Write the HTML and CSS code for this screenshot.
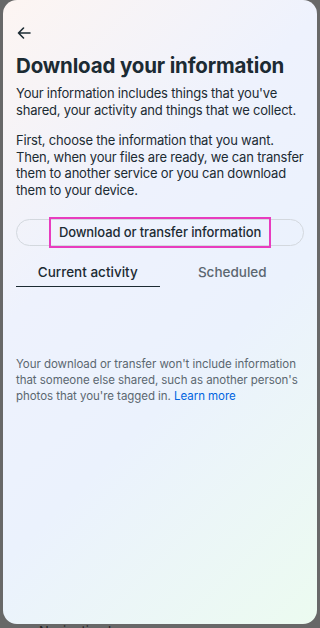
FILE: index.html
```html
<!DOCTYPE html>
<html lang="en">
<head>
<meta charset="utf-8">
<title>Download your information</title>
<link rel="stylesheet" href="styles.css">
</head>
<body>
<div class="screen">
  <div class="card">
    <button class="back" aria-label="Back">
      <svg width="14" height="12" viewBox="0 0 14 12"><path d="M13 6H1.5M6.5 1L1.5 6l5 5" fill="none" stroke="#1c2b33" stroke-width="1.6" stroke-linecap="round" stroke-linejoin="round"/></svg>
    </button>
    <h1 class="title">Download your information</h1>
    <p class="text">Your information includes things that you've shared, your activity and things that we collect.</p>
    <p class="text second">First, choose the information that you want. Then, when your files are ready, we can transfer them to another service or you can download them to your device.</p>
    <div class="pill"><span class="pill-label">Download or transfer information</span></div>
    <div class="tabs">
      <div class="tab active">Current activity</div>
      <div class="tab">Scheduled</div>
    </div>
    <p class="note">Your download or transfer won't include information that someone else shared, such as another person's photos that you're tagged in. <a class="link" href="#">Learn more</a></p>
  </div>
  <div class="navbar"><span class="nav-icon">&lt;&gt;</span><span>Navigation bar</span></div>
</div>
</body>
</html>
```
FILE: styles.css
```css
html, body {
  margin: 0;
  padding: 0;
  background: #686868;
  font-family: Inter, "Noto Sans", sans-serif;
  color: #1c2b33;
}
.screen {
  width: 320px;
  height: 628px;
  overflow: hidden;
}
.card {
  margin: 0 3px;
  height: 624px;
  box-sizing: border-box;
  border-radius: 14px;
  padding: 24px 13px 0;
  background:
    linear-gradient(135deg, #fdf5f2 0%, #eef2fd 35%, #ebf2fd 60%, #ecfbf0 100%);
}
.back {
  display: block;
  border: 0;
  background: none;
  padding: 0;
  width: 14px;
  height: 14px;
  margin: 2px 0 0 1px;
}
.back svg { display: block; }
.title {
  margin: 14px 0 0;
  font-size: 20.5px;
  line-height: 24px;
  font-weight: 700;
  letter-spacing: -0.15px;
}
.text {
  margin: 7px 0 0;
  font-size: 13px;
  line-height: 16.5px;
  letter-spacing: -0.2px;
}
.text.second { margin-top: 14px; }
.pill {
  margin-top: 21px;
  height: 27px;
  border: 1px solid #d3d8de;
  border-radius: 14px;
  box-sizing: border-box;
  display: flex;
  align-items: center;
  justify-content: center;
}
.pill-label {
  font-size: 13px;
  font-weight: 500;
  padding: 4px 8px;
  outline: 2px solid #e83cbf;
  outline-offset: 0;
  line-height: 19px;
  letter-spacing: -0.1px;
}
.tabs {
  display: flex;
  margin-top: 17px;
}
.tab {
  width: 144px;
  text-align: center;
  font-size: 13.5px;
  font-weight: 500;
  line-height: 18px;
  padding-bottom: 5px;
  color: #5b6770;
}
.tab.active {
  color: #1c2b33;
  border-bottom: 1px solid #1c2b33;
}
.tab + .tab { margin-left: 1px; }
.note {
  margin: 69px 0 0;
  font-size: 11.5px;
  line-height: 16px;
  letter-spacing: -0.05px;
  color: #5b6770;
}
.link {
  color: #0064e0;
  text-decoration: none;
}
.navbar {
  display: flex;
  align-items: center;
  gap: 10px;
  padding-left: 13px;
  height: 14px;
  font-size: 13px;
  color: #222;
  margin-top: -1px;
  line-height: 14px;
  padding-top: 1px;
}
.nav-icon { font-size: 12px; }
```
